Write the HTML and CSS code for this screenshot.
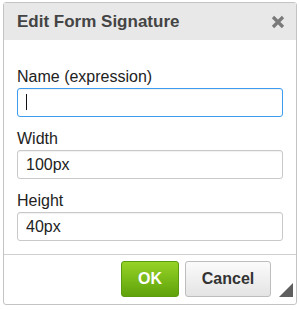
FILE: index.html
```html
<!DOCTYPE html>
<html lang="en">
<head>
    <meta charset="UTF-8">
    <title>Edit Form Signature</title>
    <link rel="stylesheet" href="styles.css">
</head>
<body>
    <div class="dialog">
        <div class="dialog-title">
            <span>Edit Form Signature</span>
            <svg class="close-icon" width="14" height="14" viewBox="0 0 14 14">
                <path d="M2 2 L12 12 M12 2 L2 12" stroke="#7a7a7a" stroke-width="3.2"/>
            </svg>
        </div>

        <div class="dialog-body">
            <label class="field-label" for="sigName">Name (expression)</label>
            <input class="field-input focused" type="text" id="sigName">

            <label class="field-label" for="sigWidth">Width</label>
            <input class="field-input" type="text" id="sigWidth" value="100px">

            <label class="field-label" for="sigHeight">Height</label>
            <input class="field-input" type="text" id="sigHeight" value="40px">
        </div>

        <div class="dialog-footer">
            <button class="ok-btn">OK</button>
            <button class="cancel-btn">Cancel</button>
        </div>

        <svg class="resize-grip" width="14" height="14" viewBox="0 0 14 14">
            <polygon points="14,0 14,14 0,14" fill="#5f5f5f"/>
        </svg>
    </div>
</body>
</html>
```

FILE: styles.css
```css
* {
    margin: 0;
    padding: 0;
    box-sizing: border-box;
    font-family: 'Liberation Sans', Arial, sans-serif;
}

body {
    background-color: #fff;
}

.dialog {
    position: relative;
    margin: 2px 0 0 3px;
    width: 294px;
    height: 303px;
    border: 1px solid #c4c4c4;
    border-radius: 3px;
    display: flex;
    flex-direction: column;
    background-color: #fff;
}

.dialog-title {
    height: 37px;
    padding: 0 11px 0 13px;
    background-color: #e8e8e8;
    display: flex;
    justify-content: space-between;
    align-items: center;
    font-size: 17px;
    font-weight: bold;
    color: #444;
}

.close-icon {
    margin-top: 1px;
}

.dialog-body {
    padding: 28px 12px 0 13px;
    display: flex;
    flex-direction: column;
}

.field-label {
    font-size: 16px;
    line-height: 18px;
    color: #222;
    margin-bottom: 2px;
}

.field-input {
    width: 266px;
    height: 29px;
    margin-bottom: 13px;
    padding: 0 8px;
    border: 1px solid #c9c9c9;
    border-radius: 3px;
    box-shadow: inset 0 1px 1px rgba(0, 0, 0, 0.06);
    font-size: 16px;
    color: #222;
    outline: none;
}

/* fake text caret for the focused field */
.field-input.focused {
    border-color: #3d9cf0;
    background: linear-gradient(#111, #111) no-repeat 8px 5px / 1px 16px, #fff;
}

.dialog-footer {
    margin-top: auto;
    border-top: 1px solid #cfcfcf;
    padding: 6px 25px 7px 0;
    display: flex;
    justify-content: flex-end;
    gap: 6px;
}

.dialog-footer button {
    height: 36px;
    border-radius: 3px;
    font-size: 16px;
    font-weight: bold;
    cursor: pointer;
}

.ok-btn {
    width: 58px;
    color: #fff;
    border: 1px solid #5c9a0f;
    background: linear-gradient(#96d326, #5fa20b);
}

.cancel-btn {
    width: 86px;
    color: #333;
    border: 1px solid #bdbdbd;
    background: linear-gradient(#fbfbfb, #e4e4e4);
}

.resize-grip {
    position: absolute;
    right: 3px;
    bottom: 7px;
}
```
